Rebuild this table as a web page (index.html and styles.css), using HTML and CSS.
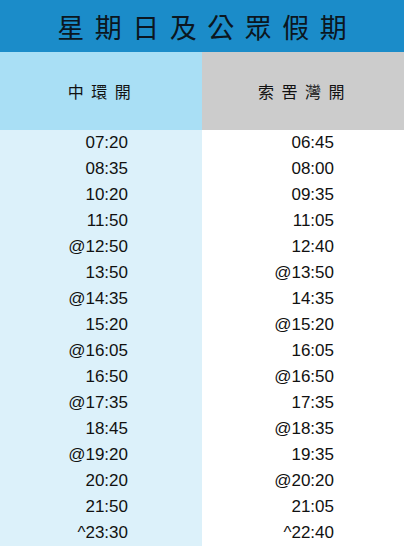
FILE: index.html
```html
<!DOCTYPE html>
<html lang="zh-Hant">
<head>
<meta charset="utf-8">
<link rel="stylesheet" href="styles.css">
</head>
<body>
<div class="page">
  <h1 class="title">星期日及公眾假期</h1>
  <div class="table">
    <div class="head head-left">中環開</div>
    <div class="head head-right">索罟灣開</div>
    <div class="col col-left">
      <div class="cell">07:20</div>
      <div class="cell">08:35</div>
      <div class="cell">10:20</div>
      <div class="cell">11:50</div>
      <div class="cell">@12:50</div>
      <div class="cell">13:50</div>
      <div class="cell">@14:35</div>
      <div class="cell">15:20</div>
      <div class="cell">@16:05</div>
      <div class="cell">16:50</div>
      <div class="cell">@17:35</div>
      <div class="cell">18:45</div>
      <div class="cell">@19:20</div>
      <div class="cell">20:20</div>
      <div class="cell">21:50</div>
      <div class="cell">^23:30</div>
    </div>
    <div class="col col-right">
      <div class="cell">06:45</div>
      <div class="cell">08:00</div>
      <div class="cell">09:35</div>
      <div class="cell">11:05</div>
      <div class="cell">12:40</div>
      <div class="cell">@13:50</div>
      <div class="cell">14:35</div>
      <div class="cell">@15:20</div>
      <div class="cell">16:05</div>
      <div class="cell">@16:50</div>
      <div class="cell">17:35</div>
      <div class="cell">@18:35</div>
      <div class="cell">19:35</div>
      <div class="cell">@20:20</div>
      <div class="cell">21:05</div>
      <div class="cell">^22:40</div>
    </div>
  </div>
</div>
</body>
</html>
```
FILE: styles.css
```css
html, body {
  margin: 0;
  padding: 0;
  background: #ffffff;
}
.page {
  width: 404px;
  height: 546px;
  overflow: hidden;
  font-family: "Liberation Sans", Arial, "Noto Sans CJK TC", sans-serif;
  color: #111111;
}
.title {
  margin: 0;
  height: 52px;
  background: #1b8cc9;
  display: flex;
  align-items: center;
  justify-content: center;
  font-family: "Noto Sans CJK TC", sans-serif;
  font-size: 27px;
  font-weight: 400;
  letter-spacing: 10.5px;
  padding-left: 10.5px;
  color: #0b1620;
  box-sizing: border-box;
}
.table {
  display: grid;
  grid-template-columns: 202px 202px;
  grid-template-rows: 78px auto;
}
.head {
  display: flex;
  align-items: center;
  justify-content: center;
  font-family: "Noto Sans CJK TC", sans-serif;
  font-size: 16px;
  letter-spacing: 7.5px;
  padding-left: 4px;
  color: #111111;
}
.head-left { background: #a9dff5; }
.head-right { background: #cccccc; }
.col {
  display: flex;
  flex-direction: column;
}
.col-left { background: #dcf1fa; }
.col-right { background: #ffffff; }
.cell {
  height: 26px;
  line-height: 26px;
  font-size: 17px;
  text-align: right;
}
.col-left .cell { padding-right: 74px; }
.col-right .cell { padding-right: 70px; }
```
